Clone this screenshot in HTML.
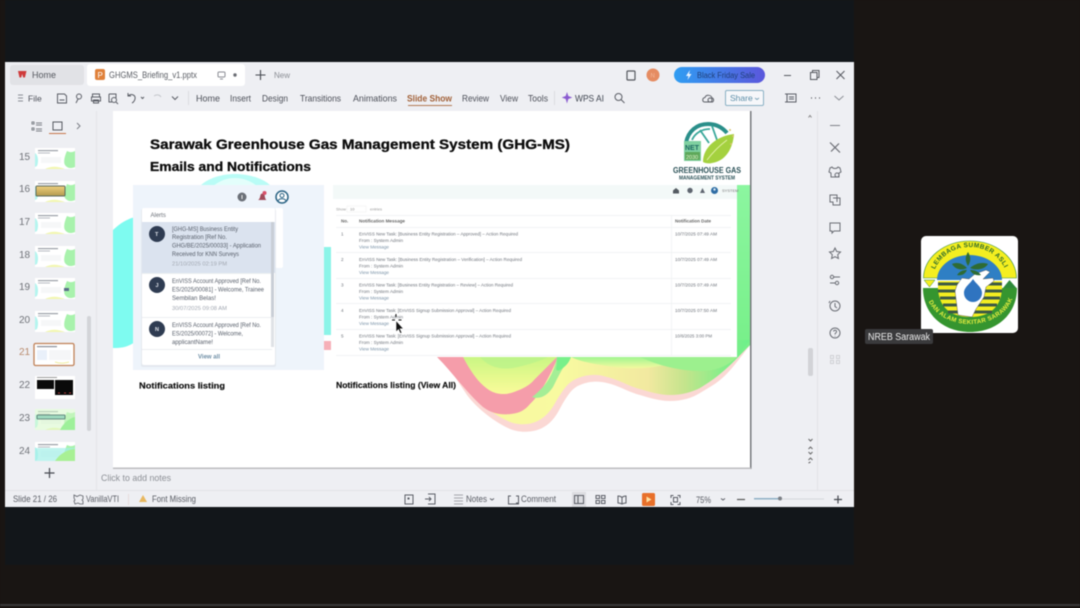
<!DOCTYPE html>
<html><head><meta charset="utf-8"><title>GHG-MS Briefing</title>
<style>
html,body{margin:0;padding:0;background:#191513;width:1080px;height:608px;overflow:hidden}
svg{display:block;filter:blur(.4px)}
text{font-family:"Liberation Sans",sans-serif;fill:#4a4d55;font-size:9px}
.m{font-size:9.5px;fill:#4c4f58}
.s{font-size:9px;fill:#5a5d65}
.n{font-size:9.5px;fill:#60636b}
.h{font-weight:bold;fill:#0c0c0c;stroke:#0c0c0c;stroke-width:.3px}
.a{font-size:6px;fill:#59606c}
.d{font-size:5.4px;fill:#a2a8b2}
.t{font-size:4.6px;fill:#6f747c}
.l{font-size:4.6px;fill:#7b93a8}
.i{fill:none;stroke:#5b5e66;stroke-width:1}
.r{fill:none;stroke:#6a6d74;stroke-width:1}
</style></head><body>
<svg width="1080" height="608" viewBox="0 0 1080 608" xmlns="http://www.w3.org/2000/svg">
<defs>
<linearGradient id="pill" x1="0" x2="1"><stop offset="0" stop-color="#2f9df2"/><stop offset="1" stop-color="#5b57dc"/></linearGradient>
<linearGradient id="wave" gradientUnits="userSpaceOnUse" x1="437" x2="747" y1="0" y2="0"><stop offset="0" stop-color="#f9f8a2"/><stop offset=".4" stop-color="#f8faa0"/><stop offset=".68" stop-color="#f2e9a0"/><stop offset=".8" stop-color="#c4e48c"/><stop offset=".92" stop-color="#86ee8a"/><stop offset="1" stop-color="#6ef08a"/></linearGradient>
<linearGradient id="wave2" x1="0" x2="0" y1="0" y2="1"><stop offset="0" stop-color="#c9f684"/><stop offset=".55" stop-color="#e6f98e"/><stop offset="1" stop-color="#fafb9c"/></linearGradient>
<linearGradient id="band" x1="0" x2="0" y1="0" y2="1"><stop offset="0" stop-color="#a0f590"/><stop offset="1" stop-color="#f4fa9f"/></linearGradient>
<linearGradient id="right" x1="0" x2="0" y1="0" y2="1"><stop offset="0" stop-color="#8cf6a0"/><stop offset="1" stop-color="#78f08a"/></linearGradient>
<linearGradient id="gold" x1="0" x2="0" y1="0" y2="1"><stop offset="0" stop-color="#f0cf7c"/><stop offset="1" stop-color="#b29a4f"/></linearGradient>
<g id="tb">
 <rect width="40" height="21" fill="#fff"/>
 <path d="M32 3c4 2 6 1 8 0v16c-4 2-8 1-10-2s0-10 2-14z" fill="#a8f2ac"/>
 <path d="M0 5c3 2 4 8 2 13l-2 1z" fill="#b5f5ef"/>
 <path d="M10 21c6-3 12-3 20 0z" fill="#f2f7b0"/>
 <rect x="3" y="2" width="20" height="1.200" fill="#9aa0a8"/>
 <rect x="3" y="4.500" width="12" height="1" fill="#b8bcc2"/>
 <rect x="6" y="9" width="20" height="6" fill="#f6f7f8"/>
</g>
<path id="arcT" d="M932 283a38 36 0 0 1 76 0"/>
<path id="arcB" d="M926 290a44 34 0 0 0 88 0"/>
</defs>

<rect width="1080" height="608" fill="#191513"/>
<rect x="5" y="0" width="849" height="565" fill="#12161a"/>
<rect x="0" y="604" width="1080" height="2" fill="#383838"/>

<!-- window -->
<rect x="5" y="62" width="849" height="445" fill="#eeeff3"/>

<!-- tabs -->
<rect x="10" y="65" width="74" height="20" rx="3" fill="#e1e2e6"/>
<path d="M18 71h8.500l-1.600 6.500h-1.700l-1-3.500-1 3.500h-1.700z" fill="#cf3b3b"/>
<text x="32" y="78" style="font-size:9px;fill:#55585f">Home</text>
<rect x="87" y="64" width="158" height="22" rx="3" fill="#fff"/>
<rect x="95" y="69" width="10" height="11" rx="2" fill="#e0813a"/>
<text x="97.500" y="78" style="font-size:8px;fill:#fff">P</text>
<text x="109" y="78" textLength="88" lengthAdjust="spacingAndGlyphs" style="font-size:9px;fill:#5a5d64">GHGMS_Briefing_v1.pptx</text>
<rect x="218" y="72" width="7" height="5" rx="1" class="i" style="stroke:#8a8d94"/><path d="M220 79h3" class="i" style="stroke:#8a8d94"/>
<circle cx="235" cy="75" r="1.700" fill="#6a6d74"/>
<path d="M260.500 70v10M255.500 75h10" stroke="#45484f" stroke-width="1.100"/>
<text x="274" y="78" style="font-size:8px;fill:#8a8d94">New</text>

<rect x="627" y="71" width="8" height="9" rx="1" class="i" style="stroke:#55585f;stroke-width:1.200"/>
<circle cx="653" cy="75" r="6.500" fill="#e58c62"/>
<text x="650.500" y="77.500" style="font-size:6px;fill:#f4b89a">N</text>
<rect x="674" y="67" width="91" height="16" rx="8" fill="url(#pill)"/>
<path d="M690 70l-4 6h2.500l-1 4 4-6h-2.500z" fill="#eaf5ff"/>
<text x="697" y="78" textLength="58" lengthAdjust="spacingAndGlyphs" style="font-size:8.500px;fill:#1f3f78">Black Friday Sale</text>
<path d="M784 75.500h7" stroke="#55585f" stroke-width="1"/>
<path d="M810.500 72.500h6.500v7h-6.500zM812.500 72.500v-2h6.500v7h-2" class="i" style="stroke:#55585f"/>
<path d="M836.500 71l8 8M844.500 71l-8 8" stroke="#55585f" stroke-width="1"/>

<!-- menu -->
<path d="M18 95h5M18 98h5M18 101h5" stroke="#8b8e95"/>
<text x="28" y="101.500" style="font-size:8.500px;fill:#4c4f58">File</text>
<path d="M57.500 94h7l2 2v7h-9zM59.500 100h5" class="i"/>
<circle cx="79" cy="96.500" r="2.500" class="i"/><path d="M76 103l2-4" class="i"/>
<path d="M92.500 97v-3h7v3M91.500 97h9v4h-9zM93.500 100h5v3h-5z" class="i"/>
<path d="M109 94h7v4M109 94v8h3" class="i"/><circle cx="114" cy="100" r="2.500" class="i"/><path d="M116 102l2 2" class="i"/>
<path d="M128 96c3-3 8-1 7 3-.5 2-2 3.500-3 4M128 93v3h3" class="i"/>
<path d="M141 97l1.500 1.500 1.500-1.500" class="i"/>
<path d="M154 96c3-2 6-1 7 1" class="i" style="stroke:#c5c7cc"/>
<path d="M172 96.500l3 3 3-3" class="i"/>
<path d="M188.500 91v14" stroke="#dcdde1"/>
<text class="m" x="196" y="101.500" textLength="24" lengthAdjust="spacingAndGlyphs">Home</text>
<text class="m" x="230" y="101.500" textLength="21" lengthAdjust="spacingAndGlyphs">Insert</text>
<text class="m" x="262" y="101.500" textLength="26" lengthAdjust="spacingAndGlyphs">Design</text>
<text class="m" x="300" y="101.500" textLength="41" lengthAdjust="spacingAndGlyphs">Transitions</text>
<text class="m" x="353" y="101.500" textLength="44" lengthAdjust="spacingAndGlyphs">Animations</text>
<text class="m" x="407" y="101.500" textLength="45" lengthAdjust="spacingAndGlyphs" style="font-weight:bold;fill:#a2623a">Slide Show</text>
<rect x="408" y="105" width="44" height="1" fill="#b27a54"/>
<text class="m" x="462" y="101.500" textLength="27" lengthAdjust="spacingAndGlyphs">Review</text>
<text class="m" x="500" y="101.500" textLength="18" lengthAdjust="spacingAndGlyphs">View</text>
<text class="m" x="528" y="101.500" textLength="20" lengthAdjust="spacingAndGlyphs">Tools</text>
<path d="M554.500 91v14" stroke="#dcdde1"/>
<path d="M567 92l1.300 4 4 1.500-4 1.500-1.300 4.500-1.300-4.500-4-1.500 4-1.500z" fill="#8a5bd0"/>
<text class="m" x="575" y="101.500" textLength="29" lengthAdjust="spacingAndGlyphs" style="fill:#3f4550">WPS AI</text>
<circle cx="618.500" cy="97" r="3.500" class="i"/><path d="M621 99.500l3.500 3.500" class="i"/>
<path d="M705 102c-3 0-3-4 0-4.500 1-3 6-3 7 .5 2 .5 2 3 .5 4z" class="i"/><circle cx="710" cy="100" r="2" class="i"/>
<rect x="725.500" y="90.500" width="38" height="15" rx="1.500" fill="#f6f7fa" stroke="#8ab0c4"/>
<text x="730" y="101" style="font-size:8.500px;fill:#5c8ea8">Share</text>
<path d="M755 98l2 1.500 2-1.500" stroke="#7da3b8" fill="none"/>
<path d="M787 94h9v8h-9zM785 94h2M785 102h2M789 97h5M789 99h5" class="i"/>
<path d="M811 98h1M815 98h1M819 98h1" stroke="#55585f" stroke-width="1.200"/>
<path d="M834.500 96l4.500 4 4.500-4" class="i" style="stroke:#8a8d94"/>

<!-- thumbnail panel -->
<path d="M96.500 111v379" stroke="#e3e4e8"/>
<path d="M32 122h2v2h-2zM32 128h2v2h-2zM36 123h6M36 125h6M36 129h6M36 131h6" class="i" style="stroke:#7c7f86"/>
<rect x="53" y="122" width="9" height="8" class="i" style="stroke:#55585f"/>
<rect x="49" y="133" width="17" height="1" fill="#c6764a"/>
<path d="M77 123l3 3-3 3" class="i" style="stroke:#7c7f86"/>

<text x="19" y="160" style="font-size:10px;fill:#6f7278">15</text>
<text x="19" y="192" style="font-size:10px;fill:#6f7278">16</text>
<text x="19" y="225" style="font-size:10px;fill:#6f7278">17</text>
<text x="19" y="258" style="font-size:10px;fill:#6f7278">18</text>
<text x="19" y="290" style="font-size:10px;fill:#6f7278">19</text>
<text x="19" y="323" style="font-size:10px;fill:#6f7278">20</text>
<text x="19" y="355" style="font-size:10px;fill:#b88a6c">21</text>
<text x="19" y="388" style="font-size:10px;fill:#6f7278">22</text>
<text x="19" y="421" style="font-size:10px;fill:#6f7278">23</text>
<text x="19" y="454" style="font-size:10px;fill:#6f7278">24</text>
<use href="#tb" x="35" y="148"/>
<use href="#tb" x="35" y="181"/><rect x="36" y="186" width="29" height="10" rx="1" fill="url(#gold)" stroke="#5c6a5c"/>
<use href="#tb" x="35" y="213"/>
<use href="#tb" x="35" y="246"/>
<use href="#tb" x="35" y="278"/><rect x="64" y="288" width="5" height="3" fill="#5b6f8a"/>
<use href="#tb" x="35" y="311"/>
<rect x="34" y="343.500" width="40" height="22" rx="1.500" fill="#fff" stroke="#c08056" stroke-width="1.300"/>
<rect x="37" y="346" width="20" height="1.200" fill="#8a9099"/><rect x="37" y="350" width="10" height="10" fill="#e9f0fa"/><rect x="49" y="350" width="22" height="10" fill="#f5f6f8"/><path d="M55 362c6 2 10 1 14 0" stroke="#f0ee9e" fill="none"/>
<rect x="35" y="376" width="40" height="23" fill="#fff"/><rect x="37" y="380" width="17" height="9" fill="#0a0a0a"/><rect x="55" y="380" width="18" height="15" fill="#0a0a0a"/><rect x="37" y="377" width="20" height="1" fill="#999"/><path d="M58 393h2M64 393h2M69 393h2" stroke="#b63b3b"/>
<use href="#tb" x="35" y="409"/><rect x="35" y="409" width="40" height="21" fill="#d5f7c8" opacity=".55"/><rect x="37" y="415" width="28" height="4" rx=".5" fill="#9fd9bf" stroke="#4a7068" stroke-width=".8"/><path d="M60 430c4-8 10-12 15-13v13z" fill="#9ef09a"/>
<use href="#tb" x="35" y="442"/><rect x="35" y="448" width="40" height="13" fill="#a4f0e8" opacity=".7"/><path d="M55 461c5-8 14-12 20-12v12z" fill="#a8f094"/>
<rect x="35" y="461" width="40" height="4" fill="#eeeff3"/>
<rect x="87" y="316" width="4" height="115" rx="2" fill="#d3d4d8"/>
<path d="M49.500 468v10M44.500 473h10" stroke="#45484f" stroke-width="1.200"/>

<!-- slide -->
<rect x="113" y="111" width="638" height="357" fill="#fff"/>
<path d="M113 230c6-6 14-11 22-13l2 123c-8 8-18 8-24 8z" fill="#7efbf0"/>
<path d="M200 186c8-8 22-12 35-12s28 4 36 12z" fill="#a8fbf4" opacity=".8"/>
<path d="M213 186c8-6 14-8 22-8s16 3 22 8z" fill="#fff" opacity=".6"/>
<rect x="324" y="247" width="7" height="88" fill="#8cf4e8"/>
<rect x="324" y="341" width="7" height="9" fill="#f6b0b8"/>
<rect x="737" y="185" width="13" height="160" fill="url(#right)"/>
<!-- wave -->
<path d="M437 350L467 395C478 410 497 423 508 428C518 433 535 434 547 425C555 419 558 412 563 403C568 395 572 388 580 385C590 381 598 381 607 383C620 386 628 392 640 395C650 398 660 401 670 401C682 401 692 398 700 393C708 388 714 385 720 380C730 372 740 358 750 345V340H437z" fill="#fbd8d4"/>
<path d="M437 350L467 390C478 404 497 416 508 421C518 426 534 426 545 416C553 409 555 402 560 395C565 387 570 381 578 378C588 374 598 374 607 377C620 380 628 386 640 389C650 392 660 395 670 395C682 395 692 392 700 388C708 383 714 379 720 374C730 366 740 355 750 345V340H437z" fill="url(#wave)"/>
<path d="M437 357C452 372 466 392 483 407C492 414 502 415 511 414C520 413 525 410 530 404C540 395 552 372 558 357z" fill="#f59daa"/>
<path d="M463 357C470 370 478 383 489 390C497 395 506 395 514 392C522 389 529 386 534 380C542 372 550 364 557 357z" fill="url(#wave2)"/>
<path d="M480 357c8 10 22 14 38 10 12-3 22-6 30-10z" fill="#b8f28a" opacity=".7"/>
<path d="M557 357c-2 12-8 24-16 32-3 3-6 6-9 8 8 3 16-2 21-10 5-10 10-20 17-30z" fill="#a4ee96"/>
<path d="M557 357h14c-2 6-6 10-11 13-2 1-3 1-4-1 1-4 1-8 1-12z" fill="#78f08a"/>
<path d="M571 357h120c-30 12-60 14-90 8-12-2-22-4-30-8z" fill="url(#band)"/>
<path d="M640 357h97c-8 8-20 14-36 14-22 0-44-6-61-14z" fill="#9cf08e"/>
<path d="M690 357h47l13-12v-5l-13 17z" fill="#78f08a"/>

<text class="h" x="150" y="149" textLength="420" lengthAdjust="spacingAndGlyphs" style="font-size:14px">Sarawak Greenhouse Gas Management System (GHG-MS)</text>
<text class="h" x="150" y="171" textLength="161" lengthAdjust="spacingAndGlyphs" style="font-size:13px">Emails and Notifications</text>

<!-- logo -->
<path d="M686 143c2-12 11-19 22-19 8 0 14 3 19 9" fill="none" stroke="#2a8f8a" stroke-width="4"/>
<path d="M692 140c3-7 10-11 18-11M700 130l9 13M712 126l5 14" fill="none" stroke="#38a79a" stroke-width="1.800"/>
<path d="M703 162c0-15 14-26 31-28-1 14-8 27-22 29-4 1-7 0-9-1z" fill="#a4d13f"/>
<path d="M707 160c6-8 12-14 20-20" stroke="#e3f2a8" stroke-width="1" fill="none"/>
<rect x="684" y="141" width="17" height="20" fill="#7fd0a0"/>
<text x="685" y="150" style="font-size:7px;font-weight:bold;fill:#1f6a63">NET</text>
<rect x="685" y="152" width="15" height="8" fill="#5ea85a"/>
<text x="686" y="159" style="font-size:5.500px;fill:#e6f6d0">2030</text>
<circle cx="730" cy="130" r="1" fill="#d9c46c"/><circle cx="733" cy="136" r="1" fill="#d9c46c"/><circle cx="731" cy="144" r="1" fill="#d9c46c"/>
<text x="673" y="173" textLength="68" lengthAdjust="spacingAndGlyphs" style="font-size:8px;font-weight:bold;fill:#2c5258">GREENHOUSE GAS</text>
<text x="679" y="179.500" textLength="56" lengthAdjust="spacingAndGlyphs" style="font-size:5px;font-weight:bold;fill:#2c5258">MANAGEMENT SYSTEM</text>

<!-- left panel -->
<rect x="133" y="185" width="191" height="185" fill="#eef4fb"/>
<circle cx="242" cy="197" r="4.500" fill="#6b7078"/><rect x="241.500" y="195" width="1" height="4" fill="#eee"/>
<path d="M258 200c2-1 2-3 2.500-5 .5-2 3.500-2 4 0 .5 2 .5 4 2 5z" fill="#a04a5a"/><circle cx="264.500" cy="193" r="2" fill="#d8506a"/>
<circle cx="282" cy="197" r="6" fill="#fff" stroke="#2a6384" stroke-width="1.500"/><circle cx="282" cy="195.500" r="2" fill="none" stroke="#2a6384"/><path d="M278 201c1-3 7-3 8 0" fill="none" stroke="#2a6384"/>
<rect x="275" y="208" width="8" height="60" rx="2" fill="#fff"/>
<rect x="141" y="209" width="135" height="158" rx="2" fill="#dfe3e9" opacity=".7"/>
<rect x="142" y="208" width="133" height="157" rx="2" fill="#fff"/>
<text x="150.500" y="217" style="font-size:6px;fill:#6b7078">Alerts</text>
<rect x="142" y="222" width="133" height="51" fill="#dbe3ef"/>
<path d="M142 317.500h130M142 349.500h130M142 273.500h130" stroke="#eceef1"/>
<rect x="271" y="222" width="3" height="95" fill="#c9ced6"/><rect x="271" y="317" width="3" height="30" fill="#dfe2e6"/>
<circle cx="157" cy="234" r="8" fill="#2f3c52"/><circle cx="157" cy="285" r="8" fill="#2f3c52"/><circle cx="157" cy="329" r="8" fill="#2f3c52"/>
<text x="155" y="236" style="font-size:5.500px;font-weight:bold;fill:#dfe3ea">T</text>
<text x="155.500" y="287" style="font-size:5.500px;font-weight:bold;fill:#dfe3ea">J</text>
<text x="155" y="331" style="font-size:5.500px;font-weight:bold;fill:#dfe3ea">N</text>
<text class="a" x="172" y="231" textLength="66" lengthAdjust="spacingAndGlyphs">[GHG-MS] Business Entity</text>
<text class="a" x="172" y="239" textLength="55" lengthAdjust="spacingAndGlyphs">Registration [Ref No.</text>
<text class="a" x="172" y="247.500" textLength="89" lengthAdjust="spacingAndGlyphs">GHG/BE/2025/00033] - Application</text>
<text class="a" x="172" y="256" textLength="67" lengthAdjust="spacingAndGlyphs">Received for KNN Surveys</text>
<text class="d" x="172" y="265.500" textLength="55" lengthAdjust="spacingAndGlyphs">21/10/2025 02:19 PM</text>
<text class="a" x="172" y="283" textLength="89" lengthAdjust="spacingAndGlyphs">EnVISS Account Approved [Ref No.</text>
<text class="a" x="172" y="291.500" textLength="92" lengthAdjust="spacingAndGlyphs">ES/2025/00081] - Welcome, Trainee</text>
<text class="a" x="172" y="300" textLength="44" lengthAdjust="spacingAndGlyphs">Sembilan Belas!</text>
<text class="d" x="172" y="310" textLength="55" lengthAdjust="spacingAndGlyphs">30/07/2025 09:08 AM</text>
<text class="a" x="172" y="327" textLength="89" lengthAdjust="spacingAndGlyphs">EnVISS Account Approved [Ref No.</text>
<text class="a" x="172" y="335.500" textLength="71" lengthAdjust="spacingAndGlyphs">ES/2025/00072] - Welcome,</text>
<text class="a" x="172" y="344" textLength="41" lengthAdjust="spacingAndGlyphs">applicantName!</text>
<text x="198" y="358.500" textLength="22" lengthAdjust="spacingAndGlyphs" style="font-size:6.500px;font-weight:bold;fill:#6f8fa6">View all</text>
<text class="h" x="139" y="388.500" textLength="86" lengthAdjust="spacingAndGlyphs" style="font-size:8.500px;stroke-width:.15px">Notifications listing</text>

<!-- right panel -->
<rect x="333" y="185" width="404" height="172" fill="#fff"/>
<rect x="333" y="185" width="404" height="14" fill="#f3f9f8"/>
<path d="M673 190.500l3-2.500 3 2.500v3h-6z" fill="#545b62"/><circle cx="690" cy="190.500" r="2.700" fill="#5f6670"/><path d="M700 193l2.500-5 2.500 5z" fill="#5f6670"/>
<circle cx="714.500" cy="190.500" r="3.500" fill="#2e6da4"/><circle cx="714.500" cy="189.500" r="1.200" fill="#dce9f4"/>
<text x="722" y="192" style="font-size:4px;fill:#777">SYSTEM</text>
<text x="336" y="210.500" style="font-size:4px;fill:#999">Show</text><rect x="347" y="206" width="19" height="6" fill="#fff" stroke="#eee" stroke-width=".5"/><text x="350" y="210.500" style="font-size:4px;fill:#888">10</text><text x="370" y="210.500" style="font-size:4px;fill:#999">entries</text>
<path d="M336 215.500h395M336 227.500h395M336 252.500h395M336 278.500h395M336 303.500h395M336 329.500h395M336 355.500h395M671.500 215v141" stroke="#eef0f2" stroke-width=".7"/>
<text x="341" y="222.500" style="font-size:4.500px;font-weight:bold;fill:#666">No.</text>
<text x="359" y="222.500" textLength="46" lengthAdjust="spacingAndGlyphs" style="font-size:4.600px;font-weight:bold;fill:#666">Notification Message</text>
<text x="675" y="222.500" textLength="36" lengthAdjust="spacingAndGlyphs" style="font-size:4.600px;font-weight:bold;fill:#666">Notification Date</text>

<text class="t" x="341" y="235.500">1</text>
<text class="t" x="359" y="235.500" textLength="159" lengthAdjust="spacingAndGlyphs">EnVISS New Task: [Business Entity Registration – Approved] – Action Required</text>
<text class="t" x="359" y="242" textLength="44" lengthAdjust="spacingAndGlyphs">From : System Admin</text>
<text class="l" x="359" y="248.500" textLength="30" lengthAdjust="spacingAndGlyphs">View Message</text>
<text class="t" x="675" y="235.500" textLength="42" lengthAdjust="spacingAndGlyphs">10/7/2025 07:49 AM</text>

<text class="t" x="341" y="261">2</text>
<text class="t" x="359" y="261" textLength="163" lengthAdjust="spacingAndGlyphs">EnVISS New Task: [Business Entity Registration – Verification] – Action Required</text>
<text class="t" x="359" y="267.500" textLength="44" lengthAdjust="spacingAndGlyphs">From : System Admin</text>
<text class="l" x="359" y="274" textLength="30" lengthAdjust="spacingAndGlyphs">View Message</text>
<text class="t" x="675" y="261" textLength="42" lengthAdjust="spacingAndGlyphs">10/7/2025 07:49 AM</text>

<text class="t" x="341" y="286.500">3</text>
<text class="t" x="359" y="286.500" textLength="154" lengthAdjust="spacingAndGlyphs">EnVISS New Task: [Business Entity Registration – Review] – Action Required</text>
<text class="t" x="359" y="293" textLength="44" lengthAdjust="spacingAndGlyphs">From : System Admin</text>
<text class="l" x="359" y="299.500" textLength="30" lengthAdjust="spacingAndGlyphs">View Message</text>
<text class="t" x="675" y="286.500" textLength="42" lengthAdjust="spacingAndGlyphs">10/7/2025 07:49 AM</text>

<text class="t" x="341" y="312">4</text>
<text class="t" x="359" y="312" textLength="152" lengthAdjust="spacingAndGlyphs">EnVISS New Task: [EnVISS Signup Submission Approval] – Action Required</text>
<text class="t" x="359" y="318.500" textLength="44" lengthAdjust="spacingAndGlyphs">From : System Admin</text>
<text class="l" x="359" y="325" textLength="30" lengthAdjust="spacingAndGlyphs">View Message</text>
<text class="t" x="675" y="312" textLength="42" lengthAdjust="spacingAndGlyphs">10/7/2025 07:50 AM</text>

<text class="t" x="341" y="337.500">5</text>
<text class="t" x="359" y="337.500" textLength="152" lengthAdjust="spacingAndGlyphs">EnVISS New Task: [EnVISS Signup Submission Approval] – Action Required</text>
<text class="t" x="359" y="344" textLength="44" lengthAdjust="spacingAndGlyphs">From : System Admin</text>
<text class="l" x="359" y="350.500" textLength="30" lengthAdjust="spacingAndGlyphs">View Message</text>
<text class="t" x="675" y="337.500" textLength="37" lengthAdjust="spacingAndGlyphs">10/6/2025 3:00 PM</text>

<text class="h" x="336" y="388" textLength="120" lengthAdjust="spacingAndGlyphs" style="font-size:8.500px;stroke-width:.15px">Notifications listing (View All)</text>

<!-- cursor -->
<path d="M396 320.500v11.500l2.500-2.500 1.800 4 1.600-.7-1.800-4h3.400z" fill="#111" stroke="#fff" stroke-width=".6"/>
<path d="M396 314v3M392 320h3M398.500 320h3" stroke="#111" stroke-width="1"/>

<!-- slide edges -->
<rect x="750" y="111" width="1.500" height="358" fill="#77797d"/>
<rect x="113" y="467.500" width="638" height="1.500" fill="#bcbdc0"/>

<!-- right column -->
<path d="M817.500 111v379" stroke="#e2e3e7"/>
<path d="M808.500 117.500l1.500-2 1.500 2" class="i" style="stroke:#888"/>
<rect x="808" y="348" width="5" height="28" rx="2" fill="#d2d3d7"/>
<path d="M808.500 439l2 2 2-2M808.500 449l2-2 2 2M808.500 452l2 2 2-2M808.500 460l2-2 2 2M808.500 463l2-1" class="i" style="stroke:#666"/>
<path d="M830 125.500h10" stroke="#7e8188" stroke-width="1"/>
<path d="M831 143.500l8 8M839 143.500l-8 8M830 142.500l2 2M838 150.500l2 2" class="r" style="stroke-width:1.200"/>
<path d="M830 168l2-1c1 2 5 2 6 0l2 1 1 4-2 1v4h-8v-4l-2-1z" class="r"/><circle cx="837" cy="175" r="2" class="r"/>
<path d="M830 195h7v3h3v7h-7v-3h-3zM833 198h4v4" class="r"/>
<path d="M830 223h10v8h-6l-2 2v-2h-2z" class="r"/>
<path d="M835 248l1.700 3.500 3.800.5-2.800 2.700.7 3.800-3.400-1.800-3.400 1.800.7-3.800-2.800-2.700 3.800-.5z" class="r"/>
<circle cx="832" cy="277" r="1.700" class="r"/><path d="M834 277h6M830 283h5" class="r"/><circle cx="837" cy="283" r="1.700" class="r"/>
<circle cx="835" cy="306" r="5" class="r"/><path d="M835 303v3.500l2 1.500M829 303l1-2" class="r"/>
<circle cx="835" cy="333" r="5" class="r"/><path d="M833.500 331.500c.5-2 3.500-1.500 3 .5-.3 1-1.500 1-1.500 2.500M835 336v.5" class="r"/>
<path d="M830.500 355.500h3v3h-3zM836.500 355.500h3v3h-3zM830.500 360.500h3v3h-3zM836.500 360.500h3v3h-3z" class="r" style="stroke:#cfd1d5"/>

<!-- notes -->
<text class="n" x="101" y="481" textLength="70" lengthAdjust="spacingAndGlyphs" style="fill:#8d9096">Click to add notes</text>
<rect x="5" y="490" width="849" height="1" fill="#e2e3e7"/>

<!-- status bar -->
<text class="s" x="13" y="502" textLength="44" lengthAdjust="spacingAndGlyphs">Slide 21 / 26</text>
<path d="M74 495l3 1.500 3-1.500 3 1v3l-1 1 1 1v3h-3l-2-1-3 1-1-3 1-1-1-2z" class="i" style="stroke-width:.8"/>
<text class="s" x="86" y="502" textLength="33" lengthAdjust="spacingAndGlyphs">VanillaVTI</text>
<path d="M128.500 494v11" stroke="#e8dcdc"/>
<path d="M143 495l4 7h-8z" fill="#e8b860"/>
<text class="s" x="152" y="502" textLength="44" lengthAdjust="spacingAndGlyphs">Font Missing</text>
<rect x="405" y="495" width="8" height="9" class="i"/><rect x="407.500" y="497.500" width="2" height="2" fill="#5b5e66"/>
<path d="M428 494h7v10h-7M425 499h6M429 497l2 2-2 2" class="i"/>
<path d="M454 495h9M454 498h9M454 501h9M454 504h9" class="i" style="stroke:#8a8d94;stroke-width:.8"/>
<text class="s" x="466" y="502" textLength="21" lengthAdjust="spacingAndGlyphs">Notes</text>
<path d="M490 498.500l2 1.500 2-1.500" class="i"/>
<path d="M511 496h-2.500v8h10v-8h-2.500M516 503h2" class="i"/>
<text class="s" x="521" y="502" textLength="35" lengthAdjust="spacingAndGlyphs">Comment</text>
<rect x="572" y="492" width="14" height="15" fill="#dcdde1"/>
<rect x="574.500" y="495.500" width="9" height="8" class="i"/><path d="M578 495v8" class="i"/>
<path d="M596 495.500h3.500v3h-3.500zM601.500 495.500h3.500v3h-3.500zM596 500.500h3.500v3h-3.500zM601.500 500.500h3.500v3h-3.500z" class="i"/>
<path d="M618 496c2 0 3 .5 4 1.500 1-1 2-1.500 4-1.500v7c-2 0-3 .5-4 1-1-.5-2-1-4-1zM622 497.500v6" class="i"/>
<rect x="642" y="493" width="13" height="13" rx="1.500" fill="#e8702a"/><path d="M646.500 496.500l5 3-5 3z" fill="#ffe0a0"/>
<path d="M671 498v-2.500h2.500M677.500 495.500h2.500v2.500M680 502v2.500h-2.500M673.500 504.500h-2.500v-2.500" class="i"/><rect x="673.500" y="497.500" width="4" height="4.500" class="i"/>
<text class="s" x="696" y="503" textLength="15" lengthAdjust="spacingAndGlyphs">75%</text>
<path d="M721 498.500l2 1.500 2-1.500" class="i"/>
<path d="M737 499.500h8" stroke="#555" stroke-width="1.200"/>
<rect x="754" y="498.500" width="70" height="1" fill="#d4d6da"/><rect x="754" y="498" width="26" height="1.500" fill="#8fb0c6"/>
<circle cx="780" cy="498.500" r="2" fill="#7c8086"/>
<path d="M838 495.500v8M834 499.500h8" stroke="#45484f" stroke-width="1.200"/>

<!-- participant tile -->
<rect x="921" y="236" width="97" height="97" rx="5" fill="#fff"/>
<path d="M923.500 278a46.500 37 0 0 1 93 0z" fill="#f4ee20" stroke="#2e8a3a" stroke-width=".6"/>
<path d="M937 280a32.500 25 0 0 1 65 0z" fill="#2f7fc4"/>
<path d="M924 280h11l-5.500 7z" fill="#f4ee20" stroke="#2e8a3a" stroke-width=".5"/>
<path d="M1003 288l6.500-8 7 8z" fill="#2e8a3a"/>
<path d="M923 288h94c0 26-20 44-47 44s-47-18-47-44z" fill="#35952f"/>
<path d="M938 281h64v8c-1 16-10 28-32 28s-31-12-32-28z" fill="#f4ee20"/>
<path d="M938 284h64M938 291h64M940 298h60M943 305h54M948 312h44" stroke="#3d5a45" stroke-width="3"/>
<path d="M957 285l5-7 7 1 6-5 11-4 4 2-7 7 10-1 1 3-8 6-2 10-8 12-4 8-14-2-2-16-1-8z" fill="#fff" stroke="#444" stroke-width=".4"/>
<path d="M973 279c3 5 9 8 9 14a9 9 0 0 1-18 0c0-6 6-9 9-14z" fill="#2f74c0"/>
<path d="M968 252c3 5 3 9 0 14-3-5-3-9 0-14zM967 268c-5-5-10-6-15-4 3 5 9 7 15 4zM970 268c6-5 12-6 18-4-3 5-11 7-18 4zM967 270c-4 0-7 1-10 5 5 1 8-1 10-5zM970 270c4 0 8 1 11 5-5 1-9-1-11-5z" fill="#2e6b33"/>
<text style="font-size:6.500px;font-weight:bold;fill:#2c6a2c;letter-spacing:.4px"><textPath href="#arcT" startOffset="14">LEMBAGA SUMBER ASLI</textPath></text>
<text style="font-size:6.200px;font-weight:bold;fill:#e8ee40;letter-spacing:.3px"><textPath href="#arcB" startOffset="12">DAN ALAM SEKITAR SARAWAK</textPath></text>
<rect x="865" y="329" width="68" height="15" rx="2" fill="#3a3a3c"/>
<text x="868" y="340" textLength="62" lengthAdjust="spacingAndGlyphs" style="font-size:10px;fill:#eee">NREB Sarawak</text>
</svg>
</body></html>
